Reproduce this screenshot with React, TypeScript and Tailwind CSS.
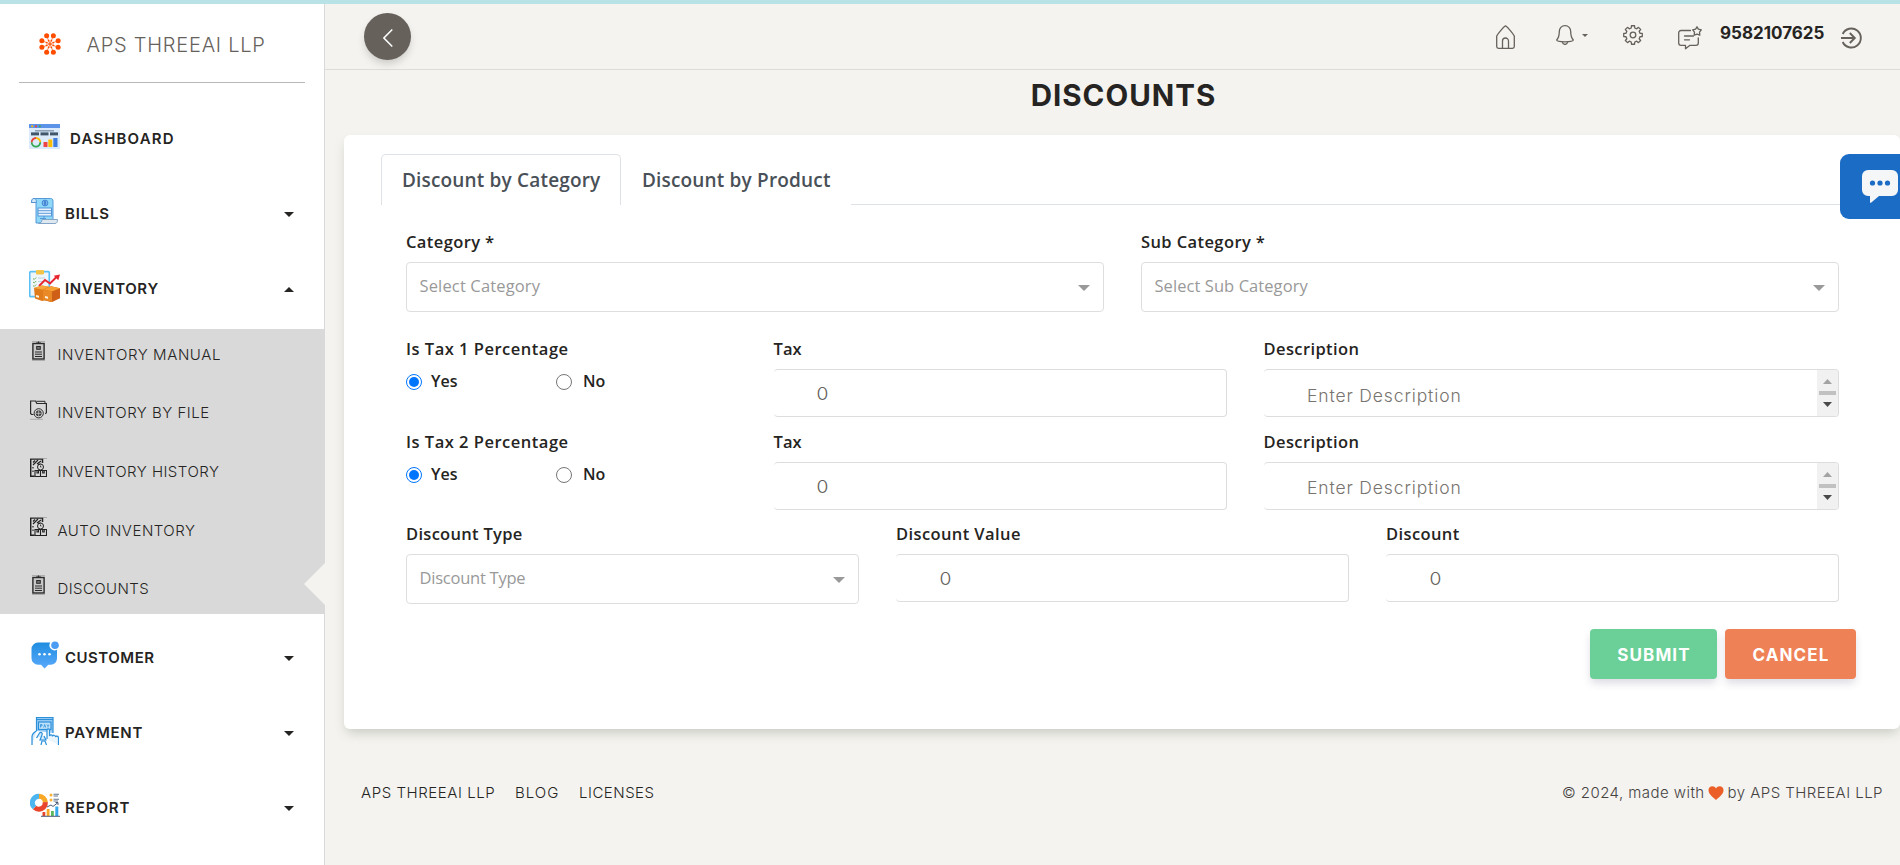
import type { ReactNode } from 'react';

const SANS = "font-['Inter',sans-serif]";
const HUMAN = "font-['Open_Sans',sans-serif]";

/* ---------- icons ---------- */

function LogoMark() {
  const spokes = Array.from({ length: 8 }, (_, i) => {
    const a = ((i * 45 + 22.5) * Math.PI) / 180;
    return { x: 11 + Math.cos(a) * 8.8, y: 11 + Math.sin(a) * 8.8, mx: 11 + Math.cos(a) * 3.6, my: 11 + Math.sin(a) * 3.6 };
  });
  return (
    <svg className="mt-[2px]" width="22" height="22" viewBox="0 0 22 22" fill="#ff4d00" stroke="#ff4d00">
      {spokes.map((s, i) => (
        <g key={i}>
          <line x1="11" y1="11" x2={s.x} y2={s.y} strokeWidth="0.7" />
          <circle cx={s.x} cy={s.y} r="2.5" stroke="none" />
          <circle cx={s.mx} cy={s.my} r="0.9" stroke="none" />
        </g>
      ))}
    </svg>
  );
}

function DashboardIcon() {
  return (
    <svg width="31" height="25" viewBox="0 0 31 25">
      <rect width="31" height="25" fill="#dcebfb" />
      <rect width="31" height="4" fill="#5b93e8" />
      <circle cx="3.2" cy="2.3" r="1.1" fill="#fbbc04" />
      <circle cx="7" cy="2.3" r="1.1" fill="#ea4335" />
      <circle cx="10.8" cy="2.3" r="1.1" fill="#34a853" />
      <rect x="6" y="6" width="19" height="1.6" fill="#8fa3b8" />
      <rect x="2" y="8.4" width="8" height="3" fill="#40566b" />
      <rect x="11.5" y="8.4" width="8" height="3" fill="#40566b" />
      <rect x="21" y="8.4" width="8" height="3" fill="#40566b" />
      <g fill="none" strokeWidth="1.8">
        <path d="M7 14a4.3 4.3 0 0 1 4.3 4.3" stroke="#fbbc04" />
        <path d="M11.3 18.3A4.3 4.3 0 0 1 7 22.6" stroke="#34a853" />
        <path d="M7 22.6a4.3 4.3 0 0 1-4.3-4.3" stroke="#34a853" />
        <path d="M2.7 18.3A4.3 4.3 0 0 1 7 14" stroke="#ea4335" />
      </g>
      <rect x="14.5" y="18" width="4" height="5" fill="#ef4444" />
      <rect x="19.3" y="15.5" width="4" height="7.5" fill="#fbbc04" />
      <rect x="24.3" y="14" width="4.2" height="9" fill="#3f7de0" />
    </svg>
  );
}

function BillsIcon() {
  return (
    <svg width="27" height="26" viewBox="0 0 27 26" strokeWidth="0.9">
      <path d="M5 3.5V25h17V3.2C22 1 21 .5 19.5.5H3.5C1 .5.5 2 .5 4.5H5" fill="#8fd8f7" stroke="#4c8fd6" />
      <path d="M.5 4.5C.5 2 1.500.5 3 .5S5.500 2 5.500 4.500Z" fill="#d6e9f8" stroke="#4c8fd6" />
      <circle cx="14" cy="5" r="2.9" fill="#7db8ee" stroke="#3b7fd0" />
      <path d="M14 3.2v3.6M13 4h2M13 6h2" stroke="#2f6fc4" />
      <rect x="7" y="10" width="13.5" height="8" fill="#eaf5fd" stroke="#4c8fd6" />
      <path d="M7 12.7h13.5M7 15.3h13.5M13 18v2M9 20.5h6" stroke="#4c8fd6" />
      <path d="M11 21.5h15.5c0 2.500-.7 4-2.5 4H7.5c2 0 3.500-1.500 3.500-4Z" fill="#dfe8ef" stroke="#7c9fc4" />
    </svg>
  );
}

function InventoryIcon() {
  return (
    <svg width="31" height="32" viewBox="0 0 31 32">
      <rect x=".7" y="1.7" width="19.6" height="25" rx="1" fill="#eef6fc" stroke="#5cc0f5" strokeWidth="1.7" />
      <rect x="7" y="0" width="8" height="4.5" rx="1.2" fill="#f3c447" />
      <path d="M4 8.5l1.2 1 2-2M4 12l1.2 1 2-2M4 15.5l1.2 1 2-2" fill="none" stroke="#6aa84f" strokeWidth=".9" />
      <path d="M9 8h7M9 11.5h5" stroke="#b8cad6" strokeWidth=".8" />
      <path d="M10 16l6-6 5 3.5 7-7" fill="none" stroke="#e8262f" strokeWidth="1.9" />
      <path d="M31 4.5l-6.3 1.3 4.6 4.4Z" fill="#e8262f" />
      <path d="M5 18l8-2.5 7 1.2v13L13 31 6 28.5Z" fill="#e07b1c" />
      <path d="M5 18l8-2.5 7 1.2-6 3Z" fill="#f6a63a" />
      <path d="M14 19.5l8-3.2 9 2v10l-8.5 4L15 30Z" fill="#cf5f17" />
      <path d="M14 19.5l8-3.2 9 2-8 3.2Z" fill="#f5a031" />
      <path d="M14 19.5l9 2V32l-9-2.5Z" fill="#ea8a26" />
      <path d="M16 26l3 .8v2l-3-.8ZM7 25l3 .8v2L7 27Z" fill="#fff4e2" />
    </svg>
  );
}

function CustomerIcon() {
  return (
    <svg width="28" height="28" viewBox="0 0 28 28">
      <defs>
        <linearGradient id="chatFill" x1="0" y1="0" x2="0" y2="1">
          <stop offset="0" stopColor="#1f8de0" />
          <stop offset="1" stopColor="#5aa9fb" />
        </linearGradient>
      </defs>
      <path
        d="M7 1.500h12.200a5.200 5.200 0 0 0 6.800 7.300V17.500a6.200 6.200 0 0 1-6.200 6.200h-2.500L13.500 27.500l-3.500-3.800H7A6.500 6.500 0 0 1 .5 17.200V8A6.500 6.500 0 0 1 7 1.500Z"
        fill="url(#chatFill)"
      />
      <circle cx="24" cy="4.2" r="3.8" fill="#4a9df2" />
      <circle cx="8.5" cy="13.3" r="1.3" fill="#fff" />
      <circle cx="13.5" cy="13.3" r="1.3" fill="#fff" />
      <circle cx="18.5" cy="13.3" r="1.3" fill="#fff" />
    </svg>
  );
}

function PaymentIcon() {
  return (
    <svg width="28" height="29" viewBox="0 0 28 29" fill="none" stroke="#2b8fd9" strokeWidth="1.2">
      <path d="M5.500 15V1.500h16.500V17" fill="#9fd0f6" />
      <path d="M5.500 3.500h16.500" />
      <rect x="7.5" y="6" width="12.5" height="7.5" fill="#bfe0fa" />
      <path d="M9.500 11.500v-3h1.500v1.500H9.500M12.700 11.500l1-3 1 3M16 8.500l1 1.500 1-1.500M17 10v1.500" strokeWidth=".8" />
      <path d="M1 29v-8.500C1 18 4 15.500 5.500 15M5.500 22l3-5c1.500-1.500 3.500 0 2.500 2l-2 5h6l-2-4" fill="#d4eafb" />
      <path d="M27.500 29v-7c0-2-2.500-2.500-3-1 0-2-2.700-2.500-3-.5 0-2-2.500-2-3-.5v-6c0-1.500-2.500-1.500-2.500 0v9" fill="#eaf5fd" />
      <path d="M10 29l1-4h3l1.500 4" />
    </svg>
  );
}

function ReportIcon() {
  return (
    <svg width="30" height="24" viewBox="0 0 30 24">
      <g fill="none" strokeWidth="5">
        <path d="M9 3.2a6.500 6.500 0 0 1 6.300 6" stroke="#f9a825" />
        <path d="M15.300 9.200A6.500 6.500 0 0 1 4.500 14.500" stroke="#e8452c" />
        <path d="M4.500 14.500A6.500 6.500 0 0 1 9 3.200" stroke="#4db6f0" />
      </g>
      <circle cx="21" cy="2" r="1.5" fill="#f9b233" />
      <circle cx="21" cy="7" r="1.5" fill="#f9b233" />
      <path d="M23.500 1.200H29M23.500 3H28M23.500 6.200H29M23.500 8H28" stroke="#66758f" strokeWidth="1.1" />
      <path d="M17 14l4-2 2 1.500 5-4M25.500 9.500H28V12" fill="none" stroke="#4a5a75" />
      <rect x="12.5" y="19" width="2.8" height="4" fill="#e8452c" />
      <rect x="16.7" y="16" width="2.8" height="7" fill="#f9a825" />
      <rect x="21" y="18" width="2.8" height="5" fill="#5cb85c" />
      <rect x="25.3" y="13.5" width="3" height="9.5" fill="#35a7ec" />
      <path d="M11 23.300h19" stroke="#4a5a75" />
    </svg>
  );
}

function ClipboardIcon() {
  return (
    <svg width="17" height="20" viewBox="0 0 17 20" fill="none" stroke="#2a2a2a">
      <path d="M2 .5h13M2 19.500h13" stroke="#9a9a9a" strokeWidth=".7" />
      <rect x="2.9" y="2.5" width="11.2" height="15.5" strokeWidth="1.4" fill="#c8c8c8" />
      <path d="M6 2h5M8.500.5V2.500" strokeWidth="1.2" />
      <rect x="6.7" y="5.500" width="3.6" height="2.8" strokeWidth="1" fill="#777" />
      <path d="M5 11h7M5 13.200h7M5 15.500h7" strokeWidth="1" />
    </svg>
  );
}

function FolderIcon() {
  return (
    <svg width="17" height="20" viewBox="0 0 17 20" fill="none" stroke="#2a2a2a">
      <path d="M3.500 14.500H1.500L.6 13.500V1h5l1.200 2.500h9.600v9l-1 1.500" strokeWidth="1.2" />
      <path d="M6.500 1.300H15v2" strokeWidth="1" />
      <circle cx="8.7" cy="13.3" r="4.6" strokeWidth="1" />
      <circle cx="8.7" cy="13.3" r="2.6" fill="#444" strokeWidth=".8" />
      <path d="M8.700 10.500v6M6 13.300h5.500" stroke="#d9d9d9" strokeWidth=".7" />
      <path d="M0 19.300h13" stroke="#9a9a9a" strokeWidth=".7" />
    </svg>
  );
}

function WarehouseIcon() {
  return (
    <svg width="17" height="20" viewBox="0 0 17 20" fill="none" stroke="#222">
      <path d="M12.500 5V1H.7v17.300h4" strokeWidth="1.5" />
      <path d="M0 .5h17" stroke="#9a9a9a" strokeWidth=".7" />
      <path d="M3 4.500l2-2M3 7l5-5M7 6l4-3M3 9v1.500M3 12.500v1.500M8 6.500l2.500-.5" strokeWidth="1.2" />
      <circle cx="10.5" cy="9" r="3" strokeWidth="1" />
      <path d="M10.500 7.500V9h1" strokeWidth=".8" />
      <path d="M5 12.500h5.500v6H5ZM10.500 12.500h6v6h-6ZM7 12.500v2.500h1.500v-2.500M12.700 12.500v2.500h1.500v-2.500" strokeWidth="1.1" />
    </svg>
  );
}

function HomeIcon() {
  return (
    <svg width="19" height="24" viewBox="0 0 19 24" fill="none" stroke="#66615b" strokeWidth="1.3" strokeLinejoin="round">
      <path d="M.7 11v10.500A1.800 1.800 0 0 0 2.500 23.300h14a1.800 1.800 0 0 0 1.800-1.800V11C17 8.500 12 2.500 9.500.8 7 2.500 2 8.500.7 11Z" />
      <path d="M6.500 23v-7a3 3 0 0 1 6 0v7" />
    </svg>
  );
}

function BellIcon() {
  return (
    <svg width="18" height="20" viewBox="0 0 18 20" fill="none" stroke="#66615b" strokeWidth="1.3" strokeLinejoin="round">
      <path d="M9 .7C5.500.7 3.300 3.300 3.300 6.500 3.300 11.500 2.800 12.700.7 15c0 1.300 4 1.800 8.300 1.800s8.300-.5 8.300-1.800c-2.100-2.300-2.600-3.500-2.600-8.500C14.700 3.300 12.500.7 9 .7Z" />
      <path d="M6.300 17.200C6.700 18.700 7.700 19.400 9 19.400s2.300-.7 2.700-2.200" />
    </svg>
  );
}

const gearPath = (() => {
  const pts: string[] = [];
  const n = 8;
  for (let i = 0; i < n; i++) {
    const base = (i * 360) / n - 90;
    const profile: [number, number][] = [
      [-14, 7.2],
      [-9.5, 9.4],
      [9.5, 9.4],
      [14, 7.2],
    ];
    for (const [da, r] of profile) {
      const a = ((base + da) * Math.PI) / 180;
      pts.push(`${(10 + r * Math.cos(a)).toFixed(2)} ${(10 + r * Math.sin(a)).toFixed(2)}`);
    }
  }
  return `M${pts.join('L')}Z`;
})();

function GearIcon() {
  return (
    <svg width="20" height="20" viewBox="0 0 20 20" fill="none" stroke="#66615b" strokeWidth="1.3" strokeLinejoin="round">
      <path d={gearPath} />
      <circle cx="10" cy="10" r="2.8" />
    </svg>
  );
}

function ChatStarIcon() {
  return (
    <svg width="24" height="24" viewBox="0 0 24 24" fill="none" stroke="#66615b" strokeWidth="1.3" strokeLinejoin="round" strokeLinecap="round">
      <path d="M12.500 4.500H3A2.300 2.300 0 0 0 .7 6.800V17A2.300 2.300 0 0 0 3 19.300h4.500v3.500l4.500-3.500h6a2.300 2.300 0 0 0 2.300-2.300v-5" />
      <path d="M6.500 10h9M6.500 13.800h5" />
      <path d="M19 .8l1.400 2.400 2.900.6-1.800 2.300.3 3L19 8.100l-2.800 1 .3-3-1.800-2.300 2.900-.6Z" />
    </svg>
  );
}

function LogoutIcon() {
  return (
    <svg width="21" height="22" viewBox="0 0 21 22" fill="none" stroke="#66615b" strokeWidth="1.9">
      <path d="M1.700 7A9.500 9.500 0 1 1 1.700 15" />
      <path d="M0 11h13.500M8.800 6l5 5-5 5" />
    </svg>
  );
}

function Caret({ up = false }: { up?: boolean }) {
  return (
    <svg className="mt-[2px]" width="10" height="5" viewBox="0 0 10 5" fill="#252422">
      <path d={up ? 'M0 5h10L5 0Z' : 'M0 0h10L5 5Z'} />
    </svg>
  );
}

/* ---------- sidebar ---------- */

function MenuRow({ icon, label, track, caret }: { icon: ReactNode; label: string; track: string; caret?: 'up' | 'down' }) {
  return (
    <div className="flex h-[75px] items-center pr-[30px] pl-[29px]">
      <span className="flex w-[31px] justify-center pb-[5px]">{icon}</span>
      <span className={`${caret ? 'ml-[5px]' : 'ml-[10px]'} mt-[2px] text-[15px] font-semibold text-[#252422] ${track}`}>{label}</span>
      {caret && (
        <span className="ml-auto">
          <Caret up={caret === 'up'} />
        </span>
      )}
    </div>
  );
}

function SubRow({ icon, label, track }: { icon: ReactNode; label: string; track: string }) {
  return (
    <li className="flex h-6 items-center">
      <span className="mb-[6px] w-[17px]">{icon}</span>
      <span className={`mt-[2px] ml-[10.5px] text-[15px] font-light text-[#252422] ${track}`}>{label}</span>
    </li>
  );
}

function Sidebar() {
  return (
    <aside className={`w-[325px] shrink-0 border-r border-[#d9d9d9] bg-white ${SANS}`}>
      <div className="mx-[19px] flex h-[79px] items-center border-b border-[#b9b8b6] pb-[1px] pl-5">
        <LogoMark />
        <span className="mt-[5px] ml-[25.5px] text-[20px] font-light tracking-[0.76px] text-[#66615b]">APS THREEAI LLP</span>
      </div>
      <nav className="mt-[18px]">
        <MenuRow icon={<DashboardIcon />} label="DASHBOARD" track="tracking-[1.15px]" />
        <MenuRow icon={<BillsIcon />} label="BILLS" track="tracking-[0.8px]" caret="down" />
        <MenuRow icon={<InventoryIcon />} label="INVENTORY" track="tracking-[0.64px]" caret="up" />
        <div className="relative mt-[3px] h-[285px] w-[325px] bg-[#d9d9d9] pt-[13px] pl-[30px]">
          <ul className="flex flex-col gap-[34.6px]">
            <SubRow icon={<ClipboardIcon />} label="INVENTORY MANUAL" track="tracking-[0.6px]" />
            <SubRow icon={<FolderIcon />} label="INVENTORY BY FILE" track="tracking-[0.5px]" />
            <SubRow icon={<WarehouseIcon />} label="INVENTORY HISTORY" track="tracking-[0.48px]" />
            <SubRow icon={<WarehouseIcon />} label="AUTO INVENTORY" track="tracking-[0.5px]" />
            <SubRow icon={<ClipboardIcon />} label="DISCOUNTS" track="tracking-[0.4px]" />
          </ul>
          <svg className="absolute right-0 bottom-[9px]" width="21" height="42" viewBox="0 0 21 42">
            <path d="M21 0v42L0 21Z" fill="#f4f3ef" />
          </svg>
        </div>
        <div className="mt-[6px]">
          <MenuRow icon={<CustomerIcon />} label="CUSTOMER" track="tracking-[0.5px]" caret="down" />
          <MenuRow icon={<PaymentIcon />} label="PAYMENT" track="tracking-[0.7px]" caret="down" />
          <MenuRow icon={<ReportIcon />} label="REPORT" track="tracking-[0.95px]" caret="down" />
        </div>
      </nav>
    </aside>
  );
}

/* ---------- top bar ---------- */

function TopBar() {
  return (
    <header className={`flex h-[66px] items-start border-b border-[#dddcd9] pr-[38px] pl-[39px] ${SANS}`}>
      <button className="mt-[9px] flex size-[47px] items-center justify-center rounded-full bg-[#66615b] shadow-[0_5px_10px_-2px_rgba(0,0,0,0.2)]">
        <svg width="10" height="18" viewBox="0 0 10 18" fill="none" stroke="#fff" strokeWidth="1.500" className="mt-[2px]">
          <path d="M9.300.5.9 9l8.400 8.500" />
        </svg>
      </button>
      <div className="ml-auto flex items-start">
        <span className="mt-[21px]"><HomeIcon /></span>
        <span className="mt-[21px] ml-[41px]"><BellIcon /></span>
        <svg className="mt-[30px] ml-[8px]" width="6" height="3" viewBox="0 0 6 3" fill="#66615b">
          <path d="M0 0h6L3 3Z" />
        </svg>
        <span className="mt-[21px] ml-[35px]"><GearIcon /></span>
        <span className="mt-[22px] ml-[35px]"><ChatStarIcon /></span>
        <span className="mt-[17px] ml-[18px] w-[105px] text-[17px] leading-6 font-bold text-[#252422]">9582107625</span>
        <span className="mt-[23px] ml-4"><LogoutIcon /></span>
      </div>
    </header>
  );
}

/* ---------- form ---------- */

function Label({ children, track = 'tracking-[0.4px]' }: { children: string; track?: string }) {
  return <div className={`h-8 whitespace-nowrap text-[16.5px] leading-6 font-semibold text-[#252422] ${track}`}>{children}</div>;
}

function SelectBox({ placeholder, track = '' }: { placeholder: string; track?: string }) {
  return (
    <div className="flex h-[50px] items-center rounded border border-[#dedede] bg-white pr-[13px] pl-[12.5px]">
      <span className={`-mt-[1px] text-[16.5px] text-[#999] ${track}`}>{placeholder}</span>
      <svg className="mt-[2px] ml-auto" width="12" height="6" viewBox="0 0 12 6" fill="#999">
        <path d="M0 0h12L6 6Z" />
      </svg>
    </div>
  );
}

function NumberBox() {
  return (
    <div className={`flex h-12 items-center rounded border border-l-0 border-[#ddd] bg-white pl-[43.5px] text-[17.5px] font-light text-[#66615b] ${SANS}`}>
      <span className="mt-[2px] scale-x-110">0</span>
    </div>
  );
}

function DescriptionBox({ textOffset }: { textOffset: string }) {
  return (
    <div className="flex h-12 overflow-hidden rounded border border-l-0 border-[#ddd] bg-white">
      <span className={`${textOffset} flex flex-1 items-center pl-[43.5px] text-[17.5px] font-light tracking-[0.87px] text-[#77736e] ${SANS}`}>
        Enter Description
      </span>
      <div className="flex w-[21px] flex-col items-center bg-[#f1f1f1] pt-[9px]">
        <svg width="9" height="5" viewBox="0 0 9 5" fill="#a3a3a3"><path d="M0 5h9L4.500 0Z" /></svg>
        <div className="mt-[7px] h-1 w-[17px] bg-[#c1c1c1]" />
        <svg className="mt-[7px]" width="9" height="5" viewBox="0 0 9 5" fill="#4a4a4a"><path d="M0 0h9L4.500 5Z" /></svg>
      </div>
    </div>
  );
}

function Radio({ checked = false }: { checked?: boolean }) {
  return (
    <span className={`mt-[2px] flex size-4 shrink-0 items-center justify-center rounded-full border bg-white ${checked ? 'border-[1.5px] border-[#0075ff]' : 'border-[#767676]'}`}>
      {checked && <span className="size-[10px] rounded-full bg-[#0075ff]" />}
    </span>
  );
}

function YesNo() {
  return (
    <div className="flex h-6 items-center text-[16px] leading-6 font-semibold text-[#252422]">
      <Radio checked />
      <span className="ml-[9px] w-[125px]">Yes</span>
      <Radio />
      <span className="ml-[11px]">No</span>
    </div>
  );
}

function TaxRow({ title, textOffset }: { title: string; textOffset: string }) {
  return (
    <>
      <div className="col-span-3">
        <Label track="tracking-[0.5px]">{title}</Label>
        <YesNo />
      </div>
      <div className="col-span-4">
        <Label track="tracking-[0.1px]">Tax</Label>
        <NumberBox />
      </div>
      <div className="col-span-5">
        <Label>Description</Label>
        <DescriptionBox textOffset={textOffset} />
      </div>
    </>
  );
}

function DiscountCard() {
  return (
    <section className={`h-[594px] rounded-[6px] bg-white pt-[19px] shadow-[0_6px_12px_-3px_rgba(70,80,60,0.27)] ${HUMAN}`}>
      <div className="mr-[37px] ml-[37px] flex h-[51px] text-[19px] font-semibold tracking-[0.17px] text-[#495057]">
        <div className="flex w-[240px] items-center rounded-t-[5px] border border-b-0 border-[#dee2e6] pt-px pl-[20px]">Discount by Category</div>
        <div className="flex w-[230px] items-center pt-[2px] pl-[21px]">Discount by Product</div>
        <div className="flex-1 border-b border-[#dee2e6]" />
      </div>

      <div className="mr-[61px] ml-[62px] grid grid-cols-12 gap-x-[37px] pt-[25px]">
        <div className="col-span-6 h-[107px]">
          <Label>Category *</Label>
          <SelectBox placeholder="Select Category" track="tracking-[0.15px]" />
        </div>
        <div className="col-span-6 h-[107px]">
          <Label>Sub Category *</Label>
          <SelectBox placeholder="Select Sub Category" track="tracking-[0.07px]" />
        </div>
      </div>
      <div className="mr-[61px] ml-[62px] grid h-[93px] grid-cols-12 gap-x-[37px]">
        <TaxRow title="Is Tax 1 Percentage" textOffset="mt-[6px]" />
      </div>
      <div className="mr-[61px] ml-[62px] grid h-[92px] grid-cols-12 gap-x-[37px]">
        <TaxRow title="Is Tax 2 Percentage" textOffset="mt-[4px]" />
      </div>
      <div className="mr-[61px] ml-[62px] grid h-[107px] grid-cols-12 gap-x-[37px]">
        <div className="col-span-4">
          <Label track="tracking-[0.3px]">Discount Type</Label>
          <SelectBox placeholder="Discount Type" track="tracking-[-0.24px]" />
        </div>
        <div className="col-span-4">
          <Label>Discount Value</Label>
          <NumberBox />
        </div>
        <div className="col-span-4">
          <Label>Discount</Label>
          <NumberBox />
        </div>
      </div>

      <div className={`mr-[44px] flex justify-end gap-2 text-[17px] font-bold text-white ${SANS}`}>
        <button className="h-[50px] w-[127px] rounded-[4px] bg-[#6bd098] pt-[3px] pl-px tracking-[1.1px] shadow-[0_5px_8px_-1px_rgba(50,50,93,0.18)]">SUBMIT</button>
        <button className="h-[50px] w-[131px] rounded-[4px] bg-[#ef8157] pt-[3px] pl-px tracking-[1.1px] shadow-[0_5px_8px_-1px_rgba(50,50,93,0.18)]">CANCEL</button>
      </div>
    </section>
  );
}

function Footer() {
  return (
    <footer className={`mt-[52px] flex h-6 items-center pr-[17px] pl-[17px] text-[15px] font-light text-[#252422] ${SANS}`}>
      <span className="w-[154px] tracking-[0.56px]">APS THREEAI LLP</span>
      <span className="w-[64px] tracking-[1px]">BLOG</span>
      <span className="tracking-[0.5px]">LICENSES</span>
      <span className="ml-auto tracking-[0.44px] text-[#45423f]">© 2024, made with</span>
      <svg className="mx-[3.5px]" width="16" height="14" viewBox="0 0 16 14" fill="#eb5e28">
        <path d="M8 14C5.500 11.500.5 8.500.5 4.200.5 1.800 2.200.3 4.300.3 6 .3 7.300 1.200 8 2.500 8.700 1.200 10 .3 11.700.3c2.100 0 3.800 1.500 3.800 3.900C15.500 8.500 10.500 11.500 8 14Z" />
      </svg>
      <span className="tracking-[0.46px] text-[#45423f]">by APS THREEAI LLP</span>
    </footer>
  );
}

export default function App() {
  return (
    <div className="relative flex h-[865px] w-full flex-col overflow-hidden bg-[#f4f3ef]">
      <div className="h-1 shrink-0 bg-[#b8e2e6]" />
      <div className="flex flex-1">
        <Sidebar />
        <main className="flex min-w-0 flex-1 flex-col">
          <TopBar />
          <div className="pl-[19px]">
            <h1 className={`mt-[5px] mb-[20px] h-10 pl-[3px] text-center text-[29.5px] leading-10 font-bold tracking-[1px] text-[#252422] ${SANS}`}>DISCOUNTS</h1>
            <DiscountCard />
            <Footer />
          </div>
        </main>
      </div>
      <div className="absolute top-[154px] right-0 flex h-[65px] w-[60px] items-center rounded-l-[9px] bg-[#1a6cc5] pl-[22px]">
        <svg width="36" height="33" viewBox="0 0 36 33">
          <path d="M6 0h24a6 6 0 0 1 6 6v14a6 6 0 0 1-6 6H17l-8 6.700c-.5.300-1 0-1-.5V26H6a6 6 0 0 1-6-6V6a6 6 0 0 1 6-6Z" fill="#f5f6f8" />
          <circle cx="10.5" cy="13" r="2.6" fill="#1a6cc5" />
          <circle cx="18" cy="13" r="2.6" fill="#1a6cc5" />
          <circle cx="25.5" cy="13" r="2.6" fill="#1a6cc5" />
        </svg>
      </div>
    </div>
  );
}
